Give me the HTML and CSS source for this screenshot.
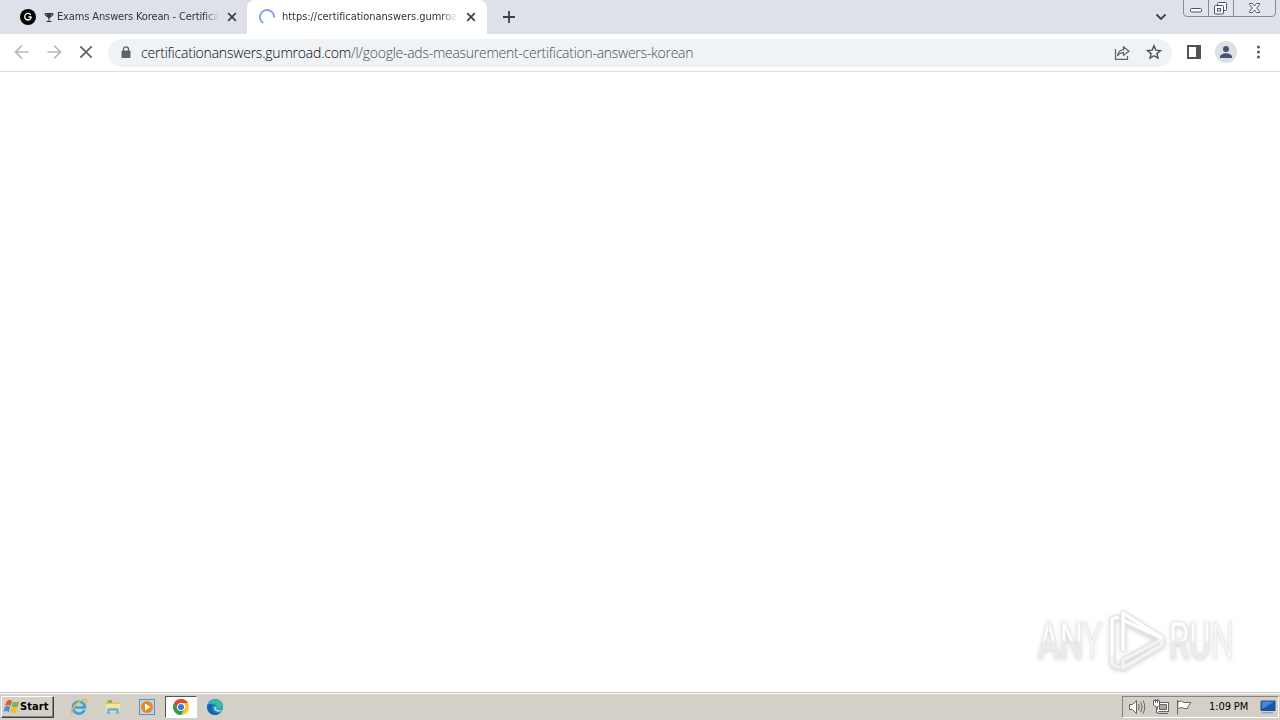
FILE: index.html
```html
<!DOCTYPE html>
<html lang="en">
<head>
<meta charset="utf-8">
<title>Browser desktop</title>
<link rel="stylesheet" href="styles.css">
</head>
<body>
<div class="desktop">
  <header class="tabs">
    <div class="tab tab-back">
      <svg class="favicon" width="16" height="16" viewBox="0 0 16 16"><circle cx="8" cy="8" r="8" fill="#000"/><path d="M10.700 5.800A3.300 3.300 0 1 0 11 9V8H8.400" fill="none" stroke="#fff" stroke-width="1.300"/></svg>
      <svg class="trophy" width="10" height="12" viewBox="0 0 10 12"><path d="M2.500 2h5v3L5.500 7.500V10h2v1h-5v-1h2V7.500L2.500 5z" fill="#33363b"/><path d="M3 2.500H1v1.500L3 5.500M7 2.500h2v1.500L7 5.500" fill="none" stroke="#33363b"/></svg>
      <span class="title title-back">Exams Answers Korean - Certifica</span>
      <svg class="close" width="10" height="10" viewBox="0 0 10 10"><path d="M1.200 1.200l7.600 7.600M8.800 1.200L1.200 8.800" stroke="#3c4043" stroke-width="1.700"/></svg>
    </div>
    <div class="tab tab-front">
      <svg class="favicon" width="16" height="16" viewBox="0 0 16 16"><path d="M4.300 14A7 7 0 1 1 15 8.500" fill="none" stroke="#7ea6e6" stroke-width="2"/></svg>
      <span class="title title-front">https://certificationanswers.gumroad</span>
      <svg class="close" width="10" height="10" viewBox="0 0 10 10"><path d="M1.200 1.200l7.600 7.600M8.800 1.200L1.200 8.800" stroke="#3c4043" stroke-width="1.700"/></svg>
    </div>
    <svg class="plus" width="12" height="12" viewBox="0 0 12 12"><path d="M6 0v12M0 6h12" stroke="#3c4043" stroke-width="1.800"/></svg>
    <svg class="chevron" width="12" height="8" viewBox="0 0 12 8"><path d="M1.500 1.500L6 6l4.500-4.500" fill="none" stroke="#3c4043" stroke-width="1.800"/></svg>
    <svg class="controls" width="93" height="17" viewBox="0 0 93 17"><path d="M.5 0v13q0 3.500 3.500 3.500h85q3.500 0 3.500-3.500V0" fill="#e1e4ea" stroke="#858a94"/><path d="M25.500 0v16M50.500 0v16" stroke="#858a94"/><g fill="#f7f8fa" stroke="#50555e"><rect x="7.500" y="8.500" width="11" height="3.500" rx="1"/><rect x="34.500" y="2.500" width="9" height="8" rx="1"/><rect x="31.500" y="5.500" width="9" height="8.500" rx="1"/><rect x="34.500" y="8.500" width="3" height="2.500"/><path d="M66.500 3.500h3l2 2.500 2-2.500h3v1L73.700 8l2.800 3.500v1h-3l-2-2.500-2 2.500h-3v-1L69.300 8l-2.800-3.500z"/></g></svg>
  </header>
  <nav class="toolbar">
    <svg class="nav-icons" width="108" height="36" viewBox="0 0 108 36" fill="none"><path d="M28.500 18H16M22 11.500L15.500 18l6.500 6.500M47.500 18H60M54 11.500l6.500 6.500-6.500 6.500" stroke="#b4b6b9" stroke-width="1.700"/><path d="M80.300 12.300l11.400 11.400M91.700 12.300L80.300 23.700" stroke="#5f6368" stroke-width="1.800"/></svg>
    <div class="address">
      <svg class="lock" width="10" height="13" viewBox="0 0 10 13"><rect x=".5" y="4.500" width="9" height="7.500" rx="1" fill="#5f6368"/><path d="M2.500 5V3.300a2.500 2.500 0 0 1 5 0V5" fill="none" stroke="#5f6368" stroke-width="1.300"/></svg>
      <span class="url"><span class="host">certificationanswers.gumroad.com</span><span class="path">/l/google-ads-measurement-certification-answers-korean</span></span>
      <svg class="share" width="16" height="16" viewBox="0 0 16 16" fill="none" stroke="#5f6368" stroke-width="1.200"><path d="M1.500 4v10.400h12V11M3.500 11c.5-4.500 3-6 6-6.300V1.800L15 6.200l-5.500 4.200V7.600c-2.500 0-4.500 1-6 3.400z"/></svg>
      <svg class="star" width="16" height="16" viewBox="0 0 16 16"><path d="M8 1.800l1.800 4.300 4.700.4-3.600 3.100 1.100 4.500L8 11.700l-4 2.400 1.100-4.500-3.600-3.100 4.700-.4z" fill="none" stroke="#4b4f54" stroke-width="1.400"/></svg>
    </div>
    <svg class="tools" width="108" height="36" viewBox="0 0 108 36"><rect x="16" y="12" width="12" height="12" fill="#fff" stroke="#505357" stroke-width="2"/><path d="M24 11h5v14h-5z" fill="#505357"/><circle cx="54" cy="18" r="11" fill="#dce0e7"/><circle cx="54" cy="15" r="3" fill="#48536d"/><path d="M48 24v-1.500c0-2 3.500-3.300 6-3.300s6 1.300 6 3.300V24z" fill="#48536d"/><g fill="#5f6368"><circle cx="86.500" cy="13" r="1.600"/><circle cx="86.500" cy="18" r="1.600"/><circle cx="86.500" cy="23" r="1.600"/></g></svg>
  </nav>
  <main class="page">
    <div class="watermark">
      <span class="mark-word mark-any">ANY</span>
      <svg class="mark-logo" width="58" height="64" viewBox="0 0 58 64" fill="none" stroke-linejoin="round"><path d="M15 42V4l39 25v7L15 59V51l38-20L15 12M11 8L4 10v45l8 4" stroke="#e2e2e2" stroke-width="5.500"/><path d="M15 42V4l39 25L15 11M11 8L4 10v36" stroke="#fff" stroke-width="3.500"/><path d="M4 46v9l8 4M54 30v6L15 59V51l38-20" stroke="#f3f3f3" stroke-width="3.500"/></svg>
      <span class="mark-word mark-run">RUN</span>
    </div>
  </main>
  <footer class="taskbar">
    <div class="start">
      <svg width="17" height="16" viewBox="0 0 17 16"><path d="M4 2q2-2 5 0L7.500 7q-3-2-5.500 0z" fill="#e4562b"/><path d="M10 2.500q3 1.500 6 0L14.500 8q-3 1-6-.5z" fill="#78b943"/><path d="M2 8q2.500-2 5 0L6 13q-3-2-5.500 0z" fill="#4b8de0"/><path d="M8 8.500q3 1.500 6 0L13 13.500q-3 1-6-.5z" fill="#f4bd2f"/></svg>
      <span class="start-label">Start</span>
    </div>
    <div class="launchers">
      <svg width="18" height="18" viewBox="0 0 18 18" fill="none"><path d="M14.500 12A6 6 0 1 1 15 9.500H5" stroke="#3aa4df" stroke-width="2.700"/><path d="M3 16C-1 15 4 5 13 2c5-1.500 4 2 2.500 4" stroke="#e9b93a" stroke-width="1.400"/></svg>
      <svg width="18" height="18" viewBox="0 0 18 18"><path d="M2 3h5l1 1h7v10H2z" fill="#e7c65e"/><path d="M4 2h4v3H4z" fill="#77b96a"/><path d="M2 6h14v8H2z" fill="#f8e49b"/><path d="M3 16v-4q0-2 2-2h8q2 0 2 2v4h-3v-3H6v3z" fill="#74b9dc"/></svg>
      <svg width="18" height="18" viewBox="0 0 18 18"><rect x="1.500" y="1.500" width="15" height="15" fill="#b9d6ef" stroke="#5f8fbe"/><circle cx="9" cy="9" r="6" fill="#ed861d"/><path d="M7 5.500l5.500 3.500L7 12.500z" fill="#fff"/></svg>
      <div class="active">
        <svg width="18" height="18" viewBox="0 0 18 18"><circle cx="9" cy="9" r="8" fill="#f9c52c"/><path d="M2.070 5A8 8 0 0 1 15.930 5H9L5.530 11z" fill="#df4634"/><path d="M2.070 5A8 8 0 0 0 9 17l3.470-6H5.530z" fill="#2c9e53"/><circle cx="9" cy="9" r="4" fill="#fff"/><circle cx="9" cy="9" r="3.100" fill="#3d79dc"/></svg>
      </div>
      <svg width="18" height="18" viewBox="0 0 18 18"><circle cx="9" cy="9" r="8" fill="#1681cb"/><path d="M1.500 7C3 1 11-1 15.500 4 18 8 17 11 13 11c-2 0-3-.5-3-1 2-3-3-6-8.500-3z" fill="#38b9a7"/><path d="M6.500 8C4 12 8 16 13 15.500l-3 1.400C4 17 .5 13 1.200 7.500 3 5 6 5.500 6.500 8z" fill="#1463ae"/><path d="M10 10c-1 1 2 3 6 1.500l-1 1.800c-3 1-7 0-7-3.300 0-2 2-2 2 0z" fill="#d4d0c8"/></svg>
    </div>
    <div class="tray">
      <svg class="tray-icons" width="66" height="18" viewBox="0 0 66 18" fill="#fff" stroke="#66645f"><path d="M1.500 6.500h3l4-4v13l-4-4h-3z"/><path d="M10.500 6q1.500 3 0 6M12.700 4q3 5 0 10M15 2.500q3.500 6.500 0 13" fill="none"/><rect x="29.500" y="4.500" width="11" height="9"/><path d="M31.500 6.500h7v5h-7z" fill="#aaa8a3"/><path d="M31 15.500h9M28.500 9v6H31"/><path d="M25.500 2.500h6V7l-2 2h-2l-2-2zM27.500 1v4M29.500 1v4"/><path d="M49.500 2v14.500M50 3.500q4-1.500 6 1h7L60.500 7.500l-1 3h-3q-3-2-7 0z"/></svg>
      <span class="clock">1:09 PM</span>
      <svg class="screen" width="16" height="14" viewBox="0 0 16 14"><path d="M1 1h14v9.500H1z" fill="#1857ad" stroke="#274d7d"/><path d="M1.500 1.500h13L2 9z" fill="#4589d6"/><path d="M3 12h9l2 1.500H1z" fill="#8aa3bc"/></svg>
    </div>
  </footer>
</div>
</body>
</html>
```
FILE: styles.css
```css
body { margin: 0; overflow: hidden; }
svg { display: block; flex-shrink: 0; }
.desktop { width: 1280px; height: 720px; display: flex; flex-direction: column; background: #fff; font-family: "DejaVu Sans Condensed", "DejaVu Sans", sans-serif; }
.tabs { height: 34px; display: flex; background: #dee1e9; flex-shrink: 0; }
.tab { height: 34px; display: flex; align-items: center; box-sizing: border-box; }
.tab-back { width: 247px; padding-left: 20px; }
.tab-front { width: 240px; padding-left: 12px; background: #fff; border-radius: 8px 8px 0 0; }
.trophy { margin-left: 8px; }
.title { font-size: 11px; line-height: 16px; color: #303439; white-space: nowrap; overflow: hidden; flex-shrink: 0; -webkit-mask-image: linear-gradient(90deg, #000 91%, transparent); mask-image: linear-gradient(90deg, #000 91%, transparent); }
.title-back { width: 162px; margin-left: 3px; letter-spacing: -0.13px; }
.title-front { width: 175px; margin-left: 7px; letter-spacing: -0.04px; }
.title-back + .close { margin-left: 8px; }
.title-front + .close { margin-left: 9px; }
.plus { margin: 11px 0 0 16px; }
.chevron { margin: 13px 16px 0 auto; }
.controls { margin-right: 4px; }
.toolbar { height: 37px; display: flex; border-bottom: 1px solid #dadce0; background: #fff; flex-shrink: 0; }
.address { width: 1064px; height: 28px; margin-top: 5px; border-radius: 14px; background: #f0f3f6; display: flex; align-items: center; box-sizing: border-box; padding: 0 10px 0 13px; }
.lock { margin-top: -2px; }
.url { width: 553px; margin-left: 10px; font-family: "Open Sans", "Noto Sans", sans-serif; font-size: 14px; font-weight: 300; line-height: 20px; white-space: nowrap; }
.host { color: #050608; letter-spacing: -0.21px; }
.path { color: #494e54; letter-spacing: -0.27px; }
.share { margin: -1px 0 0 auto; }
.star { margin: -2px 0 0 16px; }
.page { flex: 1; display: flex; justify-content: flex-end; align-items: flex-end; padding: 0 47px 19px 0; }
.watermark { display: flex; align-items: center; filter: drop-shadow(0 1px 2px #d2d2d2); }
.mark-word { font-family: Roboto, sans-serif; font-size: 50px; line-height: 60px; color: transparent; background: linear-gradient(#fff 50%, #ececec 50%); -webkit-background-clip: text; background-clip: text; -webkit-text-stroke: 1px #e9e9e9; transform-origin: left; transform: scaleX(.66); white-space: nowrap; }
.mark-any { width: 70px; }
.mark-run { width: 64px; margin-left: 3px; }
.taskbar { height: 28px; display: flex; align-items: center; box-sizing: border-box; border-top: 1px solid #c5c2bb; box-shadow: inset 0 1px #fff; background: #d4d0c8; flex-shrink: 0; }
.start { width: 53px; height: 22px; margin-left: 1px; display: flex; align-items: center; box-sizing: border-box; border: 1px solid; border-color: #fff #404040 #404040 #fff; box-shadow: inset -1px -1px #87847d; padding-left: 1px; }
.start-label { color: #000; font-size: 11px; font-weight: bold; letter-spacing: 0.1px; }
.launchers { display: flex; align-items: center; gap: 16px; margin-left: 16px; }
.active { width: 32px; height: 22px; margin: 0 -7px; display: flex; align-items: center; justify-content: center; box-sizing: border-box; background: #fff; border: 1px solid; border-color: #555 #fff #fff #555; }
.tray { width: 157px; height: 22px; margin: 0 1px 0 auto; display: flex; align-items: center; box-sizing: border-box; border: 1px solid; border-color: #87847d #fff #fff #87847d; padding-left: 5px; }
.clock { width: 40px; margin-left: 15px; font-size: 11px; line-height: 16px; color: #000; letter-spacing: -0.1px; white-space: nowrap; }
.screen { margin-left: 11px; }
```
